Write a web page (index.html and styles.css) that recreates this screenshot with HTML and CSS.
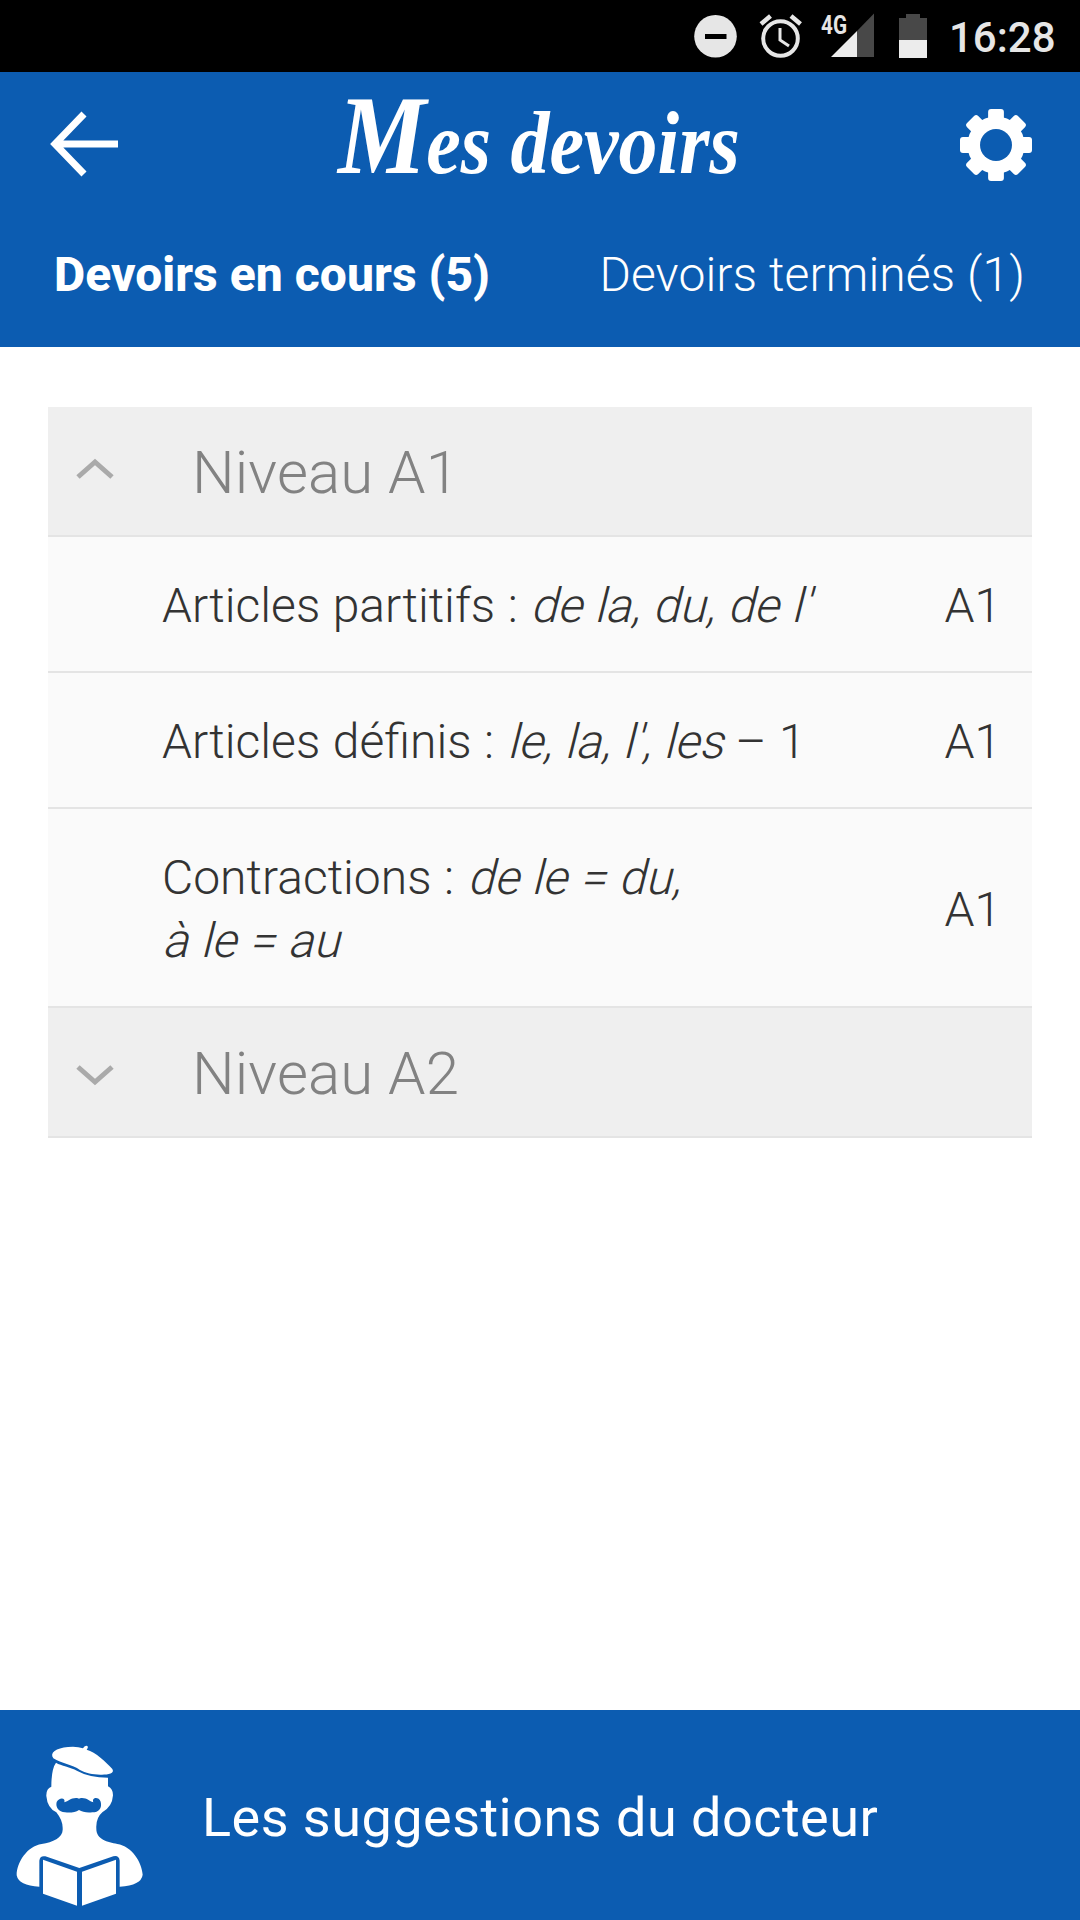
FILE: index.html
```html
<!DOCTYPE html>
<html lang="fr">
<head>
<meta charset="utf-8">
<title>Mes devoirs</title>
<link rel="stylesheet" href="styles.css">
</head>
<body>
<div class="status">
  <svg class="status-icons" width="272" height="72" viewBox="680 0 272 72">
    <circle cx="715.5" cy="36.3" r="21.3" fill="#e6e6e6"/>
    <path d="M705 36.5h21.500" stroke="#000" stroke-width="5"/>
    <g fill="none" stroke="#e6e6e6">
      <circle cx="780.5" cy="38.500" r="17.300" stroke-width="4"/>
      <path d="M780 28v12l9 6" stroke-width="3"/>
      <path d="M761 24l9.500-8M800.500 24l-9.500-8" stroke-width="4.500"/>
    </g>
    <path d="M874 13.500V57h-17V31z" fill="#484848"/>
    <path d="M857 31v26h-26z" fill="#ececec"/>
    <path d="M906 14h14v4h7v22h-28V18h7z" fill="#484848"/>
    <path d="M899 40h28v18h-28z" fill="#ececec"/>
    <text class="network" x="821" y="33.500" textLength="26" lengthAdjust="spacingAndGlyphs">4G</text>
  </svg>
  <span class="clock">16:28</span>
</div>
<header class="header">
  <div class="titlebar">
    <svg class="back" width="68" height="66" viewBox="0 0 68 66"><path d="M34 3L5 33l29 30M5 33h63" fill="none" stroke="#fff" stroke-width="7"/></svg>
    <h1 class="title"><span class="title-text">Mes devoirs</span></h1>
    <svg class="gear" width="72" height="72" viewBox="-36.500 -36.500 73 73">
      <g fill="#fff">
        <rect x="-8" y="-36.500" width="16" height="73" rx="3"/>
        <rect x="-8" y="-36.500" width="16" height="73" rx="3" transform="rotate(45)"/>
        <rect x="-8" y="-36.500" width="16" height="73" rx="3" transform="rotate(90)"/>
        <rect x="-8" y="-36.500" width="16" height="73" rx="3" transform="rotate(135)"/>
        <circle r="29"/>
      </g>
      <circle r="16.200" fill="#0c5cb1"/>
    </svg>
  </div>
  <nav class="tabs">
    <span class="tab tab-active">Devoirs en cours (5)</span>
    <span class="tab">Devoirs terminés (1)</span>
  </nav>
</header>
<main class="list">
  <div class="level">
    <svg class="chevron" width="38" height="22" viewBox="0 0 38 22"><path d="M2 19L19 4l17 15" fill="none" stroke="#aaa" stroke-width="5"/></svg>
    <span>Niveau A1</span>
  </div>
  <div class="item"><span>Articles partitifs : <em>de la, du, de l'</em></span><span class="grade">A1</span></div>
  <div class="item"><span>Articles définis : <em>le, la, l', les</em> – 1</span><span class="grade">A1</span></div>
  <div class="item"><span>Contractions : <em>de le = du,</em><br><em>à le = au</em></span><span class="grade">A1</span></div>
  <div class="level level-closed">
    <svg class="chevron" width="38" height="22" viewBox="0 0 38 22"><path d="M2 3l17 15L36 3" fill="none" stroke="#aaa" stroke-width="5"/></svg>
    <span>Niveau A2</span>
  </div>
</main>
<footer class="footer">
  <svg class="doctor" width="132" height="168" viewBox="45 130 396 504">
    <g fill="#fff">
      <path d="M168 186Q154 205 154 258Q138 264 139 286Q142 322 169 335Q189 360 188 384C190 410 160 425 125 430C82 436 50 485 50 524Q56 555 118 558V480Q120 464 136 467L238 502L340 467Q357 463 359 480V558Q424 554 428 522C426 485 395 436 352 430C322 425 288 416 289 384Q287 352 307 335Q337 318 339 284Q339 264 324 257V231Q268 231 232 211C210 198 184 196 168 186Z"/>
      <path d="M160 173C148 156 168 142 204 139Q230 136 249 143Q254 133 262 136Q266 140 260 147C287 154 318 184 337 205C345 218 325 222 306 222C282 223 257 217 240 208C217 192 184 188 160 173Z"/>
      <path d="M129 477L231 513V615L129 579ZM348 477L246 513V615L348 579Z"/>
    </g>
    <path d="M193 305C205 302 212 292 228 292Q233 291 237 294Q241 291 246 292C262 292 268 302 280 305C274 290 296 287 302 303C307 323 296 335 277 335C260 337 247 334 237 328C226 335 211 337 195 335C176 334 166 320 170 304C177 289 198 290 193 305Z" fill="#0c5cb1"/>
  </svg>
  <span>Les suggestions du docteur</span>
</footer>
</body>
</html>
```

FILE: styles.css
```css
* { box-sizing: border-box; }
body {
  margin: 0;
  width: 1080px;
  height: 1920px;
  display: flex;
  flex-direction: column;
  background: #fff;
  font-family: Roboto, "Liberation Sans", sans-serif;
  font-weight: 300;
}
svg { display: block; flex: none; }
.status {
  height: 72px;
  background: #000;
  color: #e6e6e6;
  display: flex;
  justify-content: flex-end;
  padding-right: 24px;
}
.status-icons { margin-right: -3px; }
.clock { width: 107px; font-size: 42px; font-weight: 500; line-height: 75px; white-space: nowrap; }
.network { font: 700 25px Roboto, sans-serif; fill: #e6e6e6; }
.header { height: 275px; background: #0c5cb1; color: #fff; }
.titlebar { height: 144px; padding: 0 48px 0 50px; display: flex; justify-content: space-between; align-items: center; }
.gear { margin-top: 1px; }
.title {
  margin: 0;
  width: 402px;
  height: 100px;
  font: italic 700 88px/100px "Liberation Serif", serif;
  white-space: nowrap;
}
.title-text { display: block; width: max-content; transform: scaleX(.885); transform-origin: left; }
.title-text::first-letter { font-size: 112px; line-height: 80px; }
.tabs { display: flex; justify-content: space-between; padding: 29px 55px 0 54px; }
.tab { font-size: 48px; line-height: 60px; letter-spacing: .12px; white-space: nowrap; }
.tab-active { font-weight: 800; letter-spacing: .03px; }
.list { margin: 60px 48px 0; flex: 1; }
.level {
  height: 130px;
  background: #efefef;
  border-bottom: 2px solid #e4e4e4;
  color: #828282;
  font-size: 60px;
  letter-spacing: .1px;
  display: flex;
  align-items: center;
  gap: 78px;
  padding: 3px 0 0 28px;
}
.chevron { margin-top: -7px; }
.level-closed .chevron { margin-top: 2px; }
.item {
  background: #fafafa;
  border-bottom: 2px solid #e4e4e4;
  color: #333;
  font-size: 48px;
  line-height: 63px;
  word-spacing: .8px;
  padding: 37px 31px 34px 114px;
  display: flex;
  align-items: center;
  justify-content: space-between;
}
/* Slanted roman letters, sheared about the baseline */
.item em {
  display: inline-block;
  font-style: normal;
  transform: skewX(-14deg);
  transform-origin: 0 76%;
}
.footer {
  height: 210px;
  background: #0c5cb1;
  color: #fff;
  font-size: 54px;
  font-weight: 400;
  letter-spacing: .47px;
  display: flex;
  align-items: center;
  gap: 55px;
  padding: 4px 0 0 15px;
}
.doctor { margin-top: 21px; }
```
